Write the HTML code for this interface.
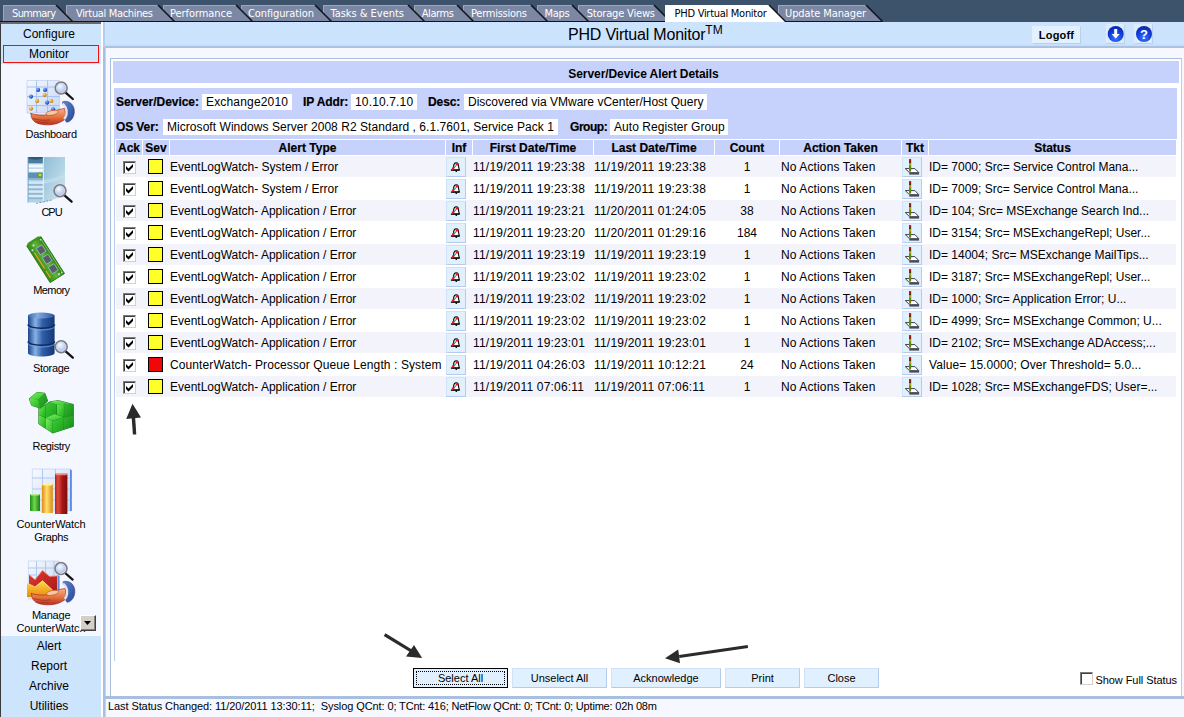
<!DOCTYPE html>
<html lang="en"><head><meta charset="utf-8"><title>PHD Virtual Monitor</title>
<style>
*{box-sizing:border-box;margin:0;padding:0}
html,body{width:1184px;height:717px;overflow:hidden}
body{position:relative;background:#3e5570;font-family:"Liberation Sans",Arial,sans-serif;font-size:12px;color:#000}
.abs{position:absolute}
#tabbar{left:0;top:0;width:1184px;height:22px;background:#3d526b}
#tabsvg{left:0;top:0}
.tabt{position:absolute;top:7px;height:14px;line-height:14px;font-family:"DejaVu Sans","Liberation Sans",sans-serif;font-stretch:condensed;font-size:11px;color:#fff;white-space:pre}
.tabt.act{color:#000}
#side{left:0;top:22px;width:103px;height:695px;background:#f4f7ff;border-left:1px solid #3c3c3c;border-top:2px solid #6a6a6a}
#sidetop{left:1px;top:24px;width:100px;height:40px;background:#cde4fd}
#sidebot{left:1px;top:636px;width:100px;height:81px;background:#cde4fd}
.sbtn{position:absolute;left:-1px;width:100px;text-align:center;font-size:12px;height:16px;line-height:16px;white-space:pre}
.slab{position:absolute;left:1px;width:100px;text-align:center;font-size:11px;line-height:13px;white-space:pre}
#sideR{left:101px;top:22px;width:2px;height:695px;background:#fff}
#mainL{left:103px;top:22px;width:3px;height:695px;background:linear-gradient(90deg,#a9bfe0 0,#a9bfe0 2px,#c6d4ec 2px,#c6d4ec 3px)}
#band{left:103px;top:22px;width:1081px;height:26px;background:linear-gradient(#cbe3fd 0,#cde4fe 22px,#c3daf5 24px,#afc5e4 24px,#a9bfe0 26px);border-left:2px solid #b6cdec}
#title{left:105px;top:22px;width:1079px;text-align:center}
#main{left:106px;top:48px;width:1078px;height:649px;background:#f7f7ff}
#mainB{left:103px;top:696px;width:1081px;height:3px;background:#a9bfe0}
#status{left:106px;top:699px;width:1078px;height:18px;background:#f6f7ff;font-size:11px;line-height:14px;white-space:pre}
#panel{left:110px;top:58px;width:1072px;height:638px;background:#fff;border:1px solid #a9bedd;border-right-color:#bccdec;border-bottom:none}
.bandc{background:#c6d2fb}
.lab{-webkit-text-stroke:.2px #000;position:absolute;font-weight:bold;font-size:12px;line-height:16px;height:16px;white-space:pre;letter-spacing:-.1px}
.box{position:absolute;background:#fff;height:16px;line-height:16px;font-size:12px;white-space:pre;padding-left:4px}
.th{-webkit-text-stroke:.2px #000;position:absolute;top:140px;height:15px;line-height:17px;overflow:hidden;background:#c6d2fb;font-weight:bold;font-size:12px;text-align:center;white-space:pre}
.row{position:absolute;left:116px;width:1060px;height:21px}
.row.odd{background:#f3f3fc}
.c{position:absolute;top:1px;height:21px;line-height:21px;font-size:12px;white-space:pre}
.cb{position:absolute;left:7px;top:5px;width:13px;height:13px;background:#fff;border:1px solid;border-color:#7b7b7b #d4d0c8 #d4d0c8 #7b7b7b;box-shadow:inset 1px 1px 0 #404040}
.sev{position:absolute;left:32px;top:3px;width:15px;height:15px;border:1px solid #000}
.ib{position:absolute;top:1px;width:20px;height:20px;background:#e1f0fd;border:1px solid;border-color:#cfe2f8 #b4cbee #b4cbee #cfe2f8}
.btn{position:absolute;top:668px;height:20px;background:#e1f0fe;border:1px solid;border-color:#cfe2f8 #b4cbee #b4cbee #cfe2f8;text-align:center;font-size:11px;line-height:18px;white-space:pre}
</style></head>
<body>
<div id="tabbar" class="abs"></div>
<svg id="tabsvg" class="abs" width="1184" height="23" viewBox="0 0 1184 23"><polygon points="778,5 866,5 882,21 778,21" fill="#7b87a3"/><polyline points="778.5,21 778.5,5.5 866,5.5" fill="none" stroke="#9ca6bd" stroke-width="1"/><line x1="866" y1="5" x2="882.5" y2="21.5" stroke="#10141c" stroke-width="1.6"/><polygon points="578,5 654,5 670,21 578,21" fill="#7b87a3"/><polyline points="578.5,21 578.5,5.5 654,5.5" fill="none" stroke="#9ca6bd" stroke-width="1"/><line x1="654" y1="5" x2="670.5" y2="21.5" stroke="#10141c" stroke-width="1.6"/><polygon points="537,5 572,5 588,21 537,21" fill="#7b87a3"/><polyline points="537.5,21 537.5,5.5 572,5.5" fill="none" stroke="#9ca6bd" stroke-width="1"/><line x1="572" y1="5" x2="588.5" y2="21.5" stroke="#10141c" stroke-width="1.6"/><polygon points="463,5 531,5 547,21 463,21" fill="#7b87a3"/><polyline points="463.5,21 463.5,5.5 531,5.5" fill="none" stroke="#9ca6bd" stroke-width="1"/><line x1="531" y1="5" x2="547.5" y2="21.5" stroke="#10141c" stroke-width="1.6"/><polygon points="414,5 457,5 473,21 414,21" fill="#7b87a3"/><polyline points="414.5,21 414.5,5.5 457,5.5" fill="none" stroke="#9ca6bd" stroke-width="1"/><line x1="457" y1="5" x2="473.5" y2="21.5" stroke="#10141c" stroke-width="1.6"/><polygon points="323,5 408,5 424,21 323,21" fill="#7b87a3"/><polyline points="323.5,21 323.5,5.5 408,5.5" fill="none" stroke="#9ca6bd" stroke-width="1"/><line x1="408" y1="5" x2="424.5" y2="21.5" stroke="#10141c" stroke-width="1.6"/><polygon points="241,5 315,5 331,21 241,21" fill="#7b87a3"/><polyline points="241.5,21 241.5,5.5 315,5.5" fill="none" stroke="#9ca6bd" stroke-width="1"/><line x1="315" y1="5" x2="331.5" y2="21.5" stroke="#10141c" stroke-width="1.6"/><polygon points="163,5 236,5 252,21 163,21" fill="#7b87a3"/><polyline points="163.5,21 163.5,5.5 236,5.5" fill="none" stroke="#9ca6bd" stroke-width="1"/><line x1="236" y1="5" x2="252.5" y2="21.5" stroke="#10141c" stroke-width="1.6"/><polygon points="66,5 158,5 174,21 66,21" fill="#7b87a3"/><polyline points="66.5,21 66.5,5.5 158,5.5" fill="none" stroke="#9ca6bd" stroke-width="1"/><line x1="158" y1="5" x2="174.5" y2="21.5" stroke="#10141c" stroke-width="1.6"/><polygon points="3,5 56,5 72,21 3,21" fill="#7b87a3"/><polyline points="3.5,21 3.5,5.5 56,5.5" fill="none" stroke="#9ca6bd" stroke-width="1"/><line x1="56" y1="5" x2="72.5" y2="21.5" stroke="#10141c" stroke-width="1.6"/><rect x="0" y="21" width="882" height="1" fill="#10141c"/><polygon points="665,5 769,5 786,22 665,22" fill="#fff"/><line x1="769" y1="5" x2="786" y2="22" stroke="#10141c" stroke-width="1.4"/></svg>
<div class="tabt" style="left:12px;letter-spacing:-0.638px">Summary</div>
<div class="tabt" style="left:76px;letter-spacing:-0.336px">Virtual Machines</div>
<div class="tabt" style="left:170px;letter-spacing:-0.066px">Performance</div>
<div class="tabt" style="left:248px;letter-spacing:-0.094px">Configuration</div>
<div class="tabt" style="left:330.5px;letter-spacing:-0.026px">Tasks &amp; Events</div>
<div class="tabt" style="left:421.7px;letter-spacing:-0.393px">Alarms</div>
<div class="tabt" style="left:471px;letter-spacing:-0.248px">Permissions</div>
<div class="tabt" style="left:544.6px;letter-spacing:-0.349px">Maps</div>
<div class="tabt" style="left:586.7px;letter-spacing:-0.182px">Storage Views</div>
<div class="tabt act" style="left:674.6px;letter-spacing:-0.281px">PHD Virtual Monitor</div>
<div class="tabt" style="left:785px;letter-spacing:-0.106px">Update Manager</div>
<div id="side" class="abs"></div><div id="sidetop" class="abs"></div><div id="sidebot" class="abs"></div>
<div class="sbtn" style="top:26px">Configure</div>
<div class="abs" style="left:3px;top:45px;width:96px;height:18px;border:1px solid #f01010"></div>
<div class="sbtn" style="top:46px">Monitor</div>
<div class="sbtn" style="top:638px">Alert</div><div class="sbtn" style="top:658px">Report</div><div class="sbtn" style="top:678px">Archive</div><div class="sbtn" style="top:698px">Utilities</div>
<svg class="abs" style="left:0;top:0" width="103" height="717" viewBox="0 0 103 717">
<defs>
<radialGradient id="lens" cx="40%" cy="35%" r="75%"><stop offset="0" stop-color="#f4faff"/><stop offset=".55" stop-color="#bcd0f4"/><stop offset="1" stop-color="#c9b4e6"/></radialGradient>
<g id="mag"><line x1="4.2" y1="4.4" x2="11.6" y2="11" stroke="#141414" stroke-width="2.3" stroke-linecap="round"/><circle cx="0" cy="0" r="5.9" fill="url(#lens)" stroke="#7d7d80" stroke-width="1.7"/><circle cx="0" cy="0" r="4.7" fill="none" stroke="#d8dde8" stroke-width=".7"/></g>
<linearGradient id="skin" x1="0" y1="0" x2="0" y2="1"><stop offset="0" stop-color="#f6b48a"/><stop offset=".55" stop-color="#e2703c"/><stop offset="1" stop-color="#b8301c"/></linearGradient>
<linearGradient id="cuff" x1="0" y1="0" x2="1" y2="1"><stop offset="0" stop-color="#5c88d4"/><stop offset="1" stop-color="#24468f"/></linearGradient>
<g id="hand">
<path d="M30.5 113.5c5 1.5 12 2 18 1.2l4-2.6c3-1.600 8-3.200 12.200-3.600l1.500 10c-3.700 2.600-7.5 5-12.5 5.8-6 1-13 .6-17.5-1.6-3.2-1.6-5.6-5.4-5-9.2z" fill="url(#skin)" stroke="#a8281c" stroke-width=".7"/>
<path d="M33 118.5c5 1.8 11 2.2 17 1.4" fill="none" stroke="#a4301e" stroke-width=".8"/>
<path d="M36 121.5c4 1 8 1.2 12 .8" fill="none" stroke="#a4301e" stroke-width=".7"/>
<ellipse cx="52" cy="112.8" rx="6.2" ry="2.3" transform="rotate(-12 52 112.8)" fill="#f8c8a4" stroke="#b84a2a" stroke-width=".6"/>
<path d="M62.500 101.800C69.500 99.500 75.300 105.500 74.300 113C73.500 118.500 70.500 121.800 66.500 122.300L64.300 118.800C67.800 115 68 108 62.800 104.200Z" fill="url(#cuff)" stroke="#4a2a8a" stroke-width=".5"/>
<path d="M62.600 103.600C67.800 107.500 67.800 115 64.200 119.200" fill="none" stroke="#dfe3ee" stroke-width="2.100"/>
</g>
<linearGradient id="sheet" x1="0" y1="0" x2="1" y2="1"><stop offset="0" stop-color="#f6f9ff"/><stop offset="1" stop-color="#c6d6f4"/></linearGradient>
<radialGradient id="bdot" cx="35%" cy="30%" r="70%"><stop offset="0" stop-color="#8ab4ff"/><stop offset="1" stop-color="#0838b0"/></radialGradient>
<radialGradient id="odot" cx="35%" cy="30%" r="70%"><stop offset="0" stop-color="#ffe08a"/><stop offset="1" stop-color="#c87800"/></radialGradient>
<linearGradient id="cpuside" x1="0" y1="0" x2="1" y2="1"><stop offset="0" stop-color="#8fbcd6"/><stop offset=".5" stop-color="#aed2e4"/><stop offset="1" stop-color="#d4e8f2"/></linearGradient>
<linearGradient id="cyl" x1="0" y1="0" x2="1" y2="0"><stop offset="0" stop-color="#1c448a"/><stop offset=".28" stop-color="#88b0e6"/><stop offset=".55" stop-color="#2f5ea8"/><stop offset="1" stop-color="#143674"/></linearGradient>
<linearGradient id="cyltop" x1="0" y1="0" x2="1" y2="0"><stop offset="0" stop-color="#3a66ae"/><stop offset=".35" stop-color="#86aae0"/><stop offset="1" stop-color="#2c559c"/></linearGradient>
<linearGradient id="gl" x1="0" y1="0" x2="1" y2="1"><stop offset="0" stop-color="#66ea4c"/><stop offset="1" stop-color="#22ac22"/></linearGradient><linearGradient id="gl2" x1="0" y1="0" x2="1" y2="1"><stop offset="0" stop-color="#7cf060"/><stop offset="1" stop-color="#2cb42c"/></linearGradient><linearGradient id="gm" x1="0" y1="0" x2="1" y2="1"><stop offset="0" stop-color="#3ccc36"/><stop offset="1" stop-color="#1ca01c"/></linearGradient>
<linearGradient id="gr" x1="0" y1="0" x2="1" y2="1"><stop offset="0" stop-color="#34ba30"/><stop offset="1" stop-color="#168c18"/></linearGradient>
<linearGradient id="gt" x1="0" y1="0" x2="1" y2="1"><stop offset="0" stop-color="#7cf060"/><stop offset="1" stop-color="#30c030"/></linearGradient>
<linearGradient id="barg" x1="0" y1="0" x2="1" y2="0"><stop offset="0" stop-color="#1d8a1a"/><stop offset=".45" stop-color="#6fd848"/><stop offset="1" stop-color="#1f7a18"/></linearGradient>
<linearGradient id="bary" x1="0" y1="0" x2="1" y2="0"><stop offset="0" stop-color="#e08a10"/><stop offset=".45" stop-color="#ffe070"/><stop offset="1" stop-color="#d88a10"/></linearGradient>
<linearGradient id="barr" x1="0" y1="0" x2="1" y2="0"><stop offset="0" stop-color="#b82020"/><stop offset=".25" stop-color="#dc4c3c"/><stop offset=".6" stop-color="#a41616"/><stop offset="1" stop-color="#7c0e0e"/></linearGradient>
<linearGradient id="mem" x1="0" y1="0" x2="1" y2="0"><stop offset="0" stop-color="#2f8a14"/><stop offset=".5" stop-color="#62b436"/><stop offset="1" stop-color="#2a7a12"/></linearGradient>
<linearGradient id="redar" x1="0" y1="0" x2="1" y2="1"><stop offset="0" stop-color="#e03a30"/><stop offset="1" stop-color="#a81818"/></linearGradient>
<linearGradient id="yelar" x1="0" y1="0" x2="0" y2="1"><stop offset="0" stop-color="#ffd840"/><stop offset="1" stop-color="#e88a10"/></linearGradient>
</defs>

<!-- Dashboard -->
<g>
<path d="M27 80.5h32.3l.4 32.5H27z" fill="url(#sheet)" stroke="#b4c8ec" stroke-width=".6"/>
<path d="M36.6 80.5v32.500M47.600 80.500v32.500M27 87h32.400M27 96.600h32.400M27 105.600h32.400" stroke="#9cbcf0" stroke-width=".9" fill="none"/>
<g fill="url(#bdot)"><circle cx="38.1" cy="89.9" r="2.1"/><circle cx="45.100" cy="89.900" r="2.100"/><circle cx="31" cy="96.600" r="2.100"/><circle cx="47.100" cy="102.600" r="2.100"/><circle cx="53.100" cy="109.300" r="2.100"/></g>
<g fill="url(#odot)"><circle cx="44.6" cy="94.9" r="2.1"/><circle cx="37.100" cy="100.900" r="2.100"/><circle cx="51.300" cy="100.900" r="2.100"/><circle cx="31" cy="108.600" r="2.100"/></g>
<use href="#hand"/>
<use href="#mag" x="61.2" y="88"/>
</g>

<!-- CPU -->
<g>
<path d="M43 157h22v39l-22 6.500z" fill="url(#cpuside)"/>
<path d="M43 180c8-1 15-3 22-6v4c-7 3-14 5-22 6z" fill="#c4deec" opacity=".7"/>
<rect x="28" y="157" width="15" height="45.500" fill="#b4d2e6"/>
<rect x="28" y="157" width="15" height="6.200" fill="#4a7ba0"/>
<path d="M28 158.500c5 1.500 10 1.500 15 0v-1.500h-15z" fill="#2e5a80"/>
<rect x="28.700" y="164.500" width="14" height="3" fill="#f4f8fc"/>
<rect x="28.700" y="168.800" width="14" height="3" fill="#f4f8fc"/>
<rect x="28" y="172.600" width="15" height="5.400" fill="#5f8fb2"/>
<rect x="28" y="178" width="15" height="2" fill="#88b4d0"/>
<circle cx="40" cy="175" r="2.100" fill="#b8e020" stroke="#4a7a10" stroke-width=".6"/>
<g fill="#d8e8f4"><rect x="28.500" y="181.500" width="14.500" height="2.200"/><rect x="28.500" y="186" width="14.500" height="2.200"/><rect x="28.500" y="190.500" width="14.500" height="2.200"/><rect x="28.500" y="195" width="14.500" height="2.200"/></g>
<g fill="#8db8d4"><rect x="28" y="184" width="15" height="1.600"/><rect x="28" y="188.500" width="15" height="1.600"/><rect x="28" y="193" width="15" height="1.600"/><rect x="28" y="197.500" width="15" height="1.600"/></g>
<path d="M28 157v45.500" stroke="#6a9cc0" stroke-width=".8"/>
<path d="M43.300 157v45.500" stroke="#ffffff" stroke-width=".8"/>
<path d="M36 203.500l16-3.500" stroke="#4a4a50" stroke-width=".9" stroke-dasharray="2 1.500" opacity=".6"/>
<use href="#mag" x="60" y="190.700"/>
</g>

<!-- Memory -->
<g transform="translate(45.600 259.700) rotate(-32.600)">
<rect x="-8.500" y="-21.800" width="17" height="43.600" fill="url(#mem)" stroke="#2a7a10" stroke-width=".8"/>
<path d="M-8.500 -21.800l2.500-2h12l3 2z" fill="#3c9a1c"/>
<rect x="-6.200" y="-12" width="1.100" height="19" fill="#ffa020"/><rect x="-6.200" y="9.500" width="1.100" height="8.500" fill="#ffa020"/>
<g fill="#5c5c64" stroke="#8cc8e8" stroke-width=".7"><rect x="-1.800" y="-14.500" width="6.800" height="7.600"/><rect x="-1.800" y="-3.300" width="6.800" height="7.600"/><rect x="-1.800" y="7.900" width="6.800" height="7.600"/></g>
<g fill="#bfe4ff"><circle cx="-2.500" cy="-18.600" r="1.100"/><circle cx="-6" cy="-15" r="1"/><circle cx="3.500" cy="19.300" r="1.100"/><circle cx="6.500" cy="-19.500" r=".8"/><circle cx="6.800" cy="19.600" r=".8"/></g>
<path d="M7.300 -20v40" stroke="#8ad060" stroke-width=".8"/>
</g>

<!-- Storage -->
<g>
<path d="M28 315.500v37.500c0 2 6 3.500 13.300 3.500s13.300-1.500 13.300-3.500v-37.500z" fill="url(#cyl)"/>
<ellipse cx="41.300" cy="315.500" rx="13.300" ry="3" fill="url(#cyltop)"/>
<path d="M28 324.400c0 2.200 6 3.800 13.300 3.800s13.300-1.600 13.300-3.800" fill="none" stroke="#0e2a5e" stroke-width="1.500"/>
<path d="M28 326.200c0 2.200 6 3.800 13.300 3.800s13.300-1.600 13.300-3.800" fill="none" stroke="#7ea4dc" stroke-width="1" opacity=".8"/>
<path d="M28 341.400c0 2.200 6 3.800 13.300 3.800s13.300-1.600 13.300-3.800" fill="none" stroke="#0e2a5e" stroke-width="1.500"/>
<path d="M28 343.200c0 2.200 6 3.800 13.300 3.800s13.300-1.600 13.300-3.800" fill="none" stroke="#7ea4dc" stroke-width="1" opacity=".8"/>
<use href="#mag" x="61.200" y="346.700"/>
</g>

<!-- Registry -->
<g>
<polygon points="38.8,408.0 45.2,404.9 49.4,401.9 58.3,400.5 73.4,404.4 73.4,426.4 52.7,433.1 38.8,423.9" fill="#138613" stroke="#0e6e0e" stroke-width=".7" stroke-linejoin="round"/>
<polygon points="49.4,401.9 58.3,400.5 73.4,404.4 65.0,403.8 56.4,404.5" fill="url(#gt)"/>
<polygon points="38.9,408.2 45.2,405.2 45.2,417.6 38.9,414.7" fill="url(#gl)"/>
<polygon points="45.5,405.2 49.4,402.0 56.2,404.5 56.2,414.4 45.6,417.6" fill="url(#gm)"/>
<polygon points="56.9,404.6 63.9,403.8 63.9,417.1 56.9,414.5" fill="url(#gl)"/>
<polygon points="64.2,403.8 73.3,404.5 73.3,415.4 64.2,417.1" fill="url(#gr)"/>
<polygon points="38.9,415.0 45.3,417.9 45.3,428.2 38.9,423.9" fill="url(#gl)"/>
<polygon points="45.7,418.0 52.6,420.8 52.6,432.9 45.7,428.4" fill="url(#gl2)"/>
<polygon points="45.8,417.8 54.7,414.2 63.8,417.2 52.7,420.5" fill="url(#gt)"/>
<polygon points="53.0,420.8 63.8,417.4 63.5,429.5 53.0,432.9" fill="url(#gm)"/>
<polygon points="64.1,417.4 73.3,415.6 73.3,426.3 63.8,429.5" fill="url(#gr)"/>
<polygon points="29.2,398.8 36.9,392.3 44.9,393.2 47.7,400.9 40.4,408.2 31.7,405.4" fill="#138613" stroke="#0e6e0e" stroke-width=".7" stroke-linejoin="round"/>
<polygon points="29.2,398.8 36.9,392.3 44.9,393.2 38.3,399.6" fill="url(#gt)"/>
<polygon points="29.2,398.8 38.3,399.6 40.4,408.2 31.7,405.4" fill="url(#gl)"/>
<polygon points="38.3,399.6 44.9,393.2 47.7,400.9 40.4,408.2" fill="url(#gr)"/>
</g>

<!-- CounterWatch Graphs -->
<g>
<path d="M32.300 469h37.700l1.500 1.500v40.500h-39.200z" fill="url(#sheet)" stroke="#b8ccf0" stroke-width=".6"/>
<path d="M70 469l1.800 1.500v40.500h-1.800z" fill="#5a8ae0"/>
<path d="M42.500 469v42M55.500 469v42M32.300 478h38M32.300 489h38M32.300 500h38" stroke="#a8c4f0" stroke-width=".9" fill="none"/>
<rect x="30" y="494" width="10" height="17" fill="url(#barg)"/><path d="M30 494h10l-1 1.500h-8z" fill="#b0f090"/>
<rect x="41.900" y="484" width="10.900" height="29" fill="url(#bary)"/><path d="M41.900 484h10.900l-1 1.500h-8.900z" fill="#fff0a0"/>
<rect x="55" y="473.700" width="12.400" height="40.300" fill="url(#barr)"/><path d="M55 473.700h12.400l-1 1.500h-10.400z" fill="#f08a78"/>
</g>

<!-- Manage CounterWatch -->
<g>
<path d="M28.400 561h30.600v38h-30.600z" fill="url(#sheet)" stroke="#b8ccf0" stroke-width=".6"/>
<path d="M36.500 561v20M45.500 561v12M54 561v16M28.400 568h30M28.400 575h8" stroke="#a8c4f0" stroke-width=".9" fill="none"/>
<path d="M57.500 575l2 1v18h-2z" fill="#5a8ae0"/>
<path d="M29 574.700l6 5 7.500-9.300 7 6 7.500-.4v18h-28z" fill="url(#redar)"/>
<path d="M29 574.700l6 5 7.500-9.300 7 6 7.500-.400" fill="none" stroke="#f08070" stroke-width=".8"/>
<path d="M27 583l8 4 7.500-6.200 10 9.200v7h-25.500z" fill="url(#yelar)"/>
<path d="M27 583l8 4 7.500-6.200 10 9.200" fill="none" stroke="#ffe890" stroke-width=".8"/>
<use href="#hand" x=".5" y="480"/>
<use href="#mag" x="61" y="568.600"/>
</g>
</svg>
<div class="slab" style="top:128px;letter-spacing:-0.279px;padding-left:0.28px">Dashboard</div>
<div class="slab" style="top:206px;letter-spacing:-1.017px;padding-left:1.02px">CPU</div>
<div class="slab" style="top:284px;letter-spacing:-0.627px;padding-left:0.63px">Memory</div>
<div class="slab" style="top:362px;letter-spacing:-0.322px;padding-left:0.32px">Storage</div>
<div class="slab" style="top:440px;letter-spacing:-0.392px;padding-left:0.39px">Registry</div>
<div class="slab" style="top:518px;letter-spacing:-0.064px;padding-left:0.06px">CounterWatch</div>
<div class="slab" style="top:531px;letter-spacing:-0.376px;padding-left:0.38px">Graphs</div>
<div class="slab" style="top:609px;letter-spacing:-0.233px;padding-left:0.23px">Manage</div>
<div class="slab" style="top:622px;letter-spacing:-0.064px;padding-left:0.06px">CounterWatch</div>
<div class="abs" style="left:80px;top:615px;width:16px;height:16px;background:#d4d0c8;border:1px solid;border-color:#fff #404040 #404040 #fff;box-shadow:inset -1px -1px 0 #808080"></div>
<svg class="abs" style="left:80px;top:615px" width="16" height="16"><polygon points="4,6 11,6 7.5,10" fill="#000"/></svg>
<div id="sideR" class="abs"></div><div id="mainL" class="abs"></div>
<div id="band" class="abs"></div>
<div class="abs" style="left:568px;top:26px;font-size:16px;line-height:18px;white-space:pre;letter-spacing:-.2px" id="ttl">PHD Virtual Monitor<span style="font-size:12px;position:relative;top:-6px;letter-spacing:0">TM</span></div>
<div class="abs" style="left:1032px;top:26px;width:49px;height:18px;background:#e3f1fe;border:1px solid;border-color:#e3f1fe #b9cfea #b9cfea #e3f1fe;font-weight:bold;font-size:11px;line-height:17px;text-align:center;letter-spacing:.2px">Logoff</div>
<div class="abs" style="left:1106px;top:24px;width:19px;height:20px;background:#dcecfc;border:1px solid;border-color:#dcecfc #b9cfea #b9cfea #dcecfc"></div>
<div class="abs" style="left:1134px;top:24px;width:19px;height:20px;background:#dcecfc;border:1px solid;border-color:#dcecfc #b9cfea #b9cfea #dcecfc"></div>
<svg class="abs" style="left:1106px;top:24px" width="48" height="20" viewBox="0 0 48 20"><defs><radialGradient id="bg1" cx="50%" cy="75%" r="70%"><stop offset="0" stop-color="#3b78ff"/><stop offset=".6" stop-color="#0f3fe0"/><stop offset="1" stop-color="#0a2aa8"/></radialGradient></defs>
<circle cx="9.7" cy="10" r="8" fill="url(#bg1)"/><path d="M8.2 5h3v5h2.6l-4.1 4.6-4.1-4.6h2.6z" fill="#fff"/>
<circle cx="38" cy="10" r="8" fill="url(#bg1)"/><text x="38" y="14.5" text-anchor="middle" font-family="Liberation Sans,Arial,sans-serif" font-weight="bold" font-size="13" fill="#fff">?</text></svg>
<div id="main" class="abs"></div><div id="mainB" class="abs"></div>
<div id="status" class="abs"><span style="position:absolute;left:2px;top:0px"><span style="letter-spacing:-0.088px">Last Status Changed: 11/20/2011 13:30:11;  Syslog QCnt: 0;</span><span style="letter-spacing:-0.191px"> TCnt: 416; NetFlow QCnt: 0; TCnt: 0; Uptime: 02h 08m</span></span></div>
<div id="panel" class="abs"></div>
<div class="abs bandc" style="left:113px;top:61px;width:1066px;height:22px"></div>
<div class="abs" style="left:110.500px;top:65.500px;width:1066px;text-align:center;font-weight:bold;font-size:12px;line-height:16px;letter-spacing:-.07px">Server/Device Alert Details</div>
<div class="abs" style="left:114px;top:88px;width:1063px;height:573px;border-left:1px solid #b7cdf0"></div>
<div class="abs bandc" style="left:114px;top:88px;width:1063px;height:51px"></div>
<div class="lab" style="left:116px;top:94px;letter-spacing:-0.03px">Server/Device:</div>
<div class="box" style="left:202px;top:94px;width:90px;letter-spacing:0.17px">Exchange2010</div>
<div class="lab" style="left:303px;top:94px;letter-spacing:-0.1px">IP Addr:</div>
<div class="box" style="left:351px;top:94px;width:66px;letter-spacing:0.15px">10.10.7.10</div>
<div class="lab" style="left:428px;top:94px;letter-spacing:-0.1px">Desc:</div>
<div class="box" style="left:464px;top:94px;width:243px;letter-spacing:0px">Discovered via VMware vCenter/Host Query</div>
<div class="lab" style="left:116px;top:119px;letter-spacing:-0.1px">OS Ver:</div>
<div class="box" style="left:163px;top:119px;width:395px;letter-spacing:0.05px">Microsoft Windows Server 2008 R2 Standard , 6.1.7601, Service Pack 1</div>
<div class="lab" style="left:570px;top:119px;letter-spacing:-0.45px">Group:</div>
<div class="box" style="left:610px;top:119px;width:118px;letter-spacing:0.07px">Auto Register Group</div>
<div class="th" style="left:116px;width:26px">Ack</div>
<div class="th" style="left:143px;width:26px">Sev</div>
<div class="th" style="left:170px;width:275px">Alert Type</div>
<div class="th" style="left:446px;width:26px">Inf</div>
<div class="th" style="left:473px;width:120px">First Date/Time</div>
<div class="th" style="left:594px;width:120px">Last Date/Time</div>
<div class="th" style="left:715px;width:64px">Count</div>
<div class="th" style="left:780px;width:121px">Action Taken</div>
<div class="th" style="left:902px;width:26px">Tkt</div>
<div class="th" style="left:929px;width:247px">Status</div>
<div class="row odd" style="top:156px"><div class="cb"><svg width="11" height="11" viewBox="0 0 11 11" style="position:absolute;left:0;top:0"><path d="M2 4v3l2.500 2.500L9 5V2L4.500 6.500z" fill="#000"/></svg></div><div class="sev" style="background:#ffff2a"></div><div class="c" style="left:54px">EventLogWatch- System / Error</div><div class="ib" style="left:330px"><svg width="18" height="18" viewBox="0 0 18 18" style="position:absolute;left:0;top:0"><g transform="translate(8.500 8.850) scale(.880) translate(-9.250 -8.750)"><path d="M5.600 12.300c1.200-1.500 1.300-3 1.500-4.600.2-2 1.200-3.500 3-3.700 1.500.1 2.300 1.300 2.500 3 .2 2 .3 3.500 1.100 5.300z" fill="#fff" stroke="#000" stroke-width="1.200"/><rect x="4" y="11.700" width="9.500" height="1.400" fill="#000"/><rect x="9.300" y="13" width="1.700" height="1.500" fill="#000"/><path d="M9.700 7.300L8.200 9" stroke="#2a8a8a" stroke-width="1.400"/><path d="M12.400 4.600L10 7" stroke="#f01010" stroke-width="2.300"/><path d="M7.800 8.800L5.400 12.300" stroke="#f01010" stroke-width="2.300"/></g></svg></div><div class="c" style="left:357px;letter-spacing:.2px">11/19/2011 19:23:38</div><div class="c" style="left:478px;letter-spacing:.2px">11/19/2011 19:23:38</div><div class="c" style="left:599px;width:64px;text-align:center">1</div><div class="c" style="left:665px;letter-spacing:.12px">No Actions Taken</div><div class="ib" style="left:786px"><svg width="18" height="18" viewBox="0 0 18 18" style="position:absolute;left:0;top:0"><path d="M2.300 10.600h9.600l4 4.100H6.500z" fill="#fff" stroke="#3c3c46" stroke-width="1"/><path d="M6.300 15.700h9.800" stroke="#4a4a52" stroke-width="1.800"/><rect x="6" y="1.200" width="2.100" height="12.400" fill="#6f7a12"/><rect x="6" y="1.200" width="2.100" height="2.100" fill="#c80c0c"/><rect x="6" y="3.300" width="2.100" height="1.800" fill="#3a3a10"/><rect x="6" y="5.200" width="2.100" height="2.600" fill="#c09a10"/><rect x="6" y="7.800" width="2.100" height="3.800" fill="#5f8a10"/></svg></div><div class="c" style="left:813px">ID= 7000; Src= Service Control Mana...</div></div>
<div class="row" style="top:178px"><div class="cb"><svg width="11" height="11" viewBox="0 0 11 11" style="position:absolute;left:0;top:0"><path d="M2 4v3l2.500 2.500L9 5V2L4.500 6.500z" fill="#000"/></svg></div><div class="sev" style="background:#ffff2a"></div><div class="c" style="left:54px">EventLogWatch- System / Error</div><div class="ib" style="left:330px"><svg width="18" height="18" viewBox="0 0 18 18" style="position:absolute;left:0;top:0"><g transform="translate(8.500 8.850) scale(.880) translate(-9.250 -8.750)"><path d="M5.600 12.300c1.200-1.500 1.300-3 1.500-4.600.2-2 1.200-3.500 3-3.700 1.500.1 2.300 1.300 2.500 3 .2 2 .3 3.500 1.100 5.300z" fill="#fff" stroke="#000" stroke-width="1.200"/><rect x="4" y="11.700" width="9.500" height="1.400" fill="#000"/><rect x="9.300" y="13" width="1.700" height="1.500" fill="#000"/><path d="M9.700 7.300L8.200 9" stroke="#2a8a8a" stroke-width="1.400"/><path d="M12.400 4.600L10 7" stroke="#f01010" stroke-width="2.300"/><path d="M7.800 8.800L5.400 12.300" stroke="#f01010" stroke-width="2.300"/></g></svg></div><div class="c" style="left:357px;letter-spacing:.2px">11/19/2011 19:23:38</div><div class="c" style="left:478px;letter-spacing:.2px">11/19/2011 19:23:38</div><div class="c" style="left:599px;width:64px;text-align:center">1</div><div class="c" style="left:665px;letter-spacing:.12px">No Actions Taken</div><div class="ib" style="left:786px"><svg width="18" height="18" viewBox="0 0 18 18" style="position:absolute;left:0;top:0"><path d="M2.300 10.600h9.600l4 4.100H6.500z" fill="#fff" stroke="#3c3c46" stroke-width="1"/><path d="M6.300 15.700h9.800" stroke="#4a4a52" stroke-width="1.800"/><rect x="6" y="1.200" width="2.100" height="12.400" fill="#6f7a12"/><rect x="6" y="1.200" width="2.100" height="2.100" fill="#c80c0c"/><rect x="6" y="3.300" width="2.100" height="1.800" fill="#3a3a10"/><rect x="6" y="5.200" width="2.100" height="2.600" fill="#c09a10"/><rect x="6" y="7.800" width="2.100" height="3.800" fill="#5f8a10"/></svg></div><div class="c" style="left:813px">ID= 7009; Src= Service Control Mana...</div></div>
<div class="row odd" style="top:200px"><div class="cb"><svg width="11" height="11" viewBox="0 0 11 11" style="position:absolute;left:0;top:0"><path d="M2 4v3l2.500 2.500L9 5V2L4.500 6.500z" fill="#000"/></svg></div><div class="sev" style="background:#ffff2a"></div><div class="c" style="left:54px">EventLogWatch- Application / Error</div><div class="ib" style="left:330px"><svg width="18" height="18" viewBox="0 0 18 18" style="position:absolute;left:0;top:0"><g transform="translate(8.500 8.850) scale(.880) translate(-9.250 -8.750)"><path d="M5.600 12.300c1.200-1.500 1.300-3 1.500-4.600.2-2 1.200-3.500 3-3.700 1.500.1 2.300 1.300 2.500 3 .2 2 .3 3.500 1.100 5.300z" fill="#fff" stroke="#000" stroke-width="1.200"/><rect x="4" y="11.700" width="9.500" height="1.400" fill="#000"/><rect x="9.300" y="13" width="1.700" height="1.500" fill="#000"/><path d="M9.700 7.300L8.200 9" stroke="#2a8a8a" stroke-width="1.400"/><path d="M12.400 4.600L10 7" stroke="#f01010" stroke-width="2.300"/><path d="M7.800 8.800L5.400 12.300" stroke="#f01010" stroke-width="2.300"/></g></svg></div><div class="c" style="left:357px;letter-spacing:.2px">11/19/2011 19:23:21</div><div class="c" style="left:478px;letter-spacing:.2px">11/20/2011 01:24:05</div><div class="c" style="left:599px;width:64px;text-align:center">38</div><div class="c" style="left:665px;letter-spacing:.12px">No Actions Taken</div><div class="ib" style="left:786px"><svg width="18" height="18" viewBox="0 0 18 18" style="position:absolute;left:0;top:0"><path d="M2.300 10.600h9.600l4 4.100H6.500z" fill="#fff" stroke="#3c3c46" stroke-width="1"/><path d="M6.300 15.700h9.800" stroke="#4a4a52" stroke-width="1.800"/><rect x="6" y="1.200" width="2.100" height="12.400" fill="#6f7a12"/><rect x="6" y="1.200" width="2.100" height="2.100" fill="#c80c0c"/><rect x="6" y="3.300" width="2.100" height="1.800" fill="#3a3a10"/><rect x="6" y="5.200" width="2.100" height="2.600" fill="#c09a10"/><rect x="6" y="7.800" width="2.100" height="3.800" fill="#5f8a10"/></svg></div><div class="c" style="left:813px">ID= 104; Src= MSExchange Search Ind...</div></div>
<div class="row" style="top:222px"><div class="cb"><svg width="11" height="11" viewBox="0 0 11 11" style="position:absolute;left:0;top:0"><path d="M2 4v3l2.500 2.500L9 5V2L4.500 6.500z" fill="#000"/></svg></div><div class="sev" style="background:#ffff2a"></div><div class="c" style="left:54px">EventLogWatch- Application / Error</div><div class="ib" style="left:330px"><svg width="18" height="18" viewBox="0 0 18 18" style="position:absolute;left:0;top:0"><g transform="translate(8.500 8.850) scale(.880) translate(-9.250 -8.750)"><path d="M5.600 12.300c1.200-1.500 1.300-3 1.500-4.600.2-2 1.200-3.500 3-3.700 1.500.1 2.300 1.300 2.500 3 .2 2 .3 3.500 1.100 5.300z" fill="#fff" stroke="#000" stroke-width="1.200"/><rect x="4" y="11.700" width="9.500" height="1.400" fill="#000"/><rect x="9.300" y="13" width="1.700" height="1.500" fill="#000"/><path d="M9.700 7.300L8.200 9" stroke="#2a8a8a" stroke-width="1.400"/><path d="M12.400 4.600L10 7" stroke="#f01010" stroke-width="2.300"/><path d="M7.800 8.800L5.400 12.300" stroke="#f01010" stroke-width="2.300"/></g></svg></div><div class="c" style="left:357px;letter-spacing:.2px">11/19/2011 19:23:20</div><div class="c" style="left:478px;letter-spacing:.2px">11/20/2011 01:29:16</div><div class="c" style="left:599px;width:64px;text-align:center">184</div><div class="c" style="left:665px;letter-spacing:.12px">No Actions Taken</div><div class="ib" style="left:786px"><svg width="18" height="18" viewBox="0 0 18 18" style="position:absolute;left:0;top:0"><path d="M2.300 10.600h9.600l4 4.100H6.500z" fill="#fff" stroke="#3c3c46" stroke-width="1"/><path d="M6.300 15.700h9.800" stroke="#4a4a52" stroke-width="1.800"/><rect x="6" y="1.200" width="2.100" height="12.400" fill="#6f7a12"/><rect x="6" y="1.200" width="2.100" height="2.100" fill="#c80c0c"/><rect x="6" y="3.300" width="2.100" height="1.800" fill="#3a3a10"/><rect x="6" y="5.200" width="2.100" height="2.600" fill="#c09a10"/><rect x="6" y="7.800" width="2.100" height="3.800" fill="#5f8a10"/></svg></div><div class="c" style="left:813px">ID= 3154; Src= MSExchangeRepl; User...</div></div>
<div class="row odd" style="top:244px"><div class="cb"><svg width="11" height="11" viewBox="0 0 11 11" style="position:absolute;left:0;top:0"><path d="M2 4v3l2.500 2.500L9 5V2L4.500 6.500z" fill="#000"/></svg></div><div class="sev" style="background:#ffff2a"></div><div class="c" style="left:54px">EventLogWatch- Application / Error</div><div class="ib" style="left:330px"><svg width="18" height="18" viewBox="0 0 18 18" style="position:absolute;left:0;top:0"><g transform="translate(8.500 8.850) scale(.880) translate(-9.250 -8.750)"><path d="M5.600 12.300c1.200-1.500 1.300-3 1.500-4.600.2-2 1.200-3.500 3-3.700 1.500.1 2.300 1.300 2.500 3 .2 2 .3 3.500 1.100 5.300z" fill="#fff" stroke="#000" stroke-width="1.200"/><rect x="4" y="11.700" width="9.500" height="1.400" fill="#000"/><rect x="9.300" y="13" width="1.700" height="1.500" fill="#000"/><path d="M9.700 7.300L8.200 9" stroke="#2a8a8a" stroke-width="1.400"/><path d="M12.400 4.600L10 7" stroke="#f01010" stroke-width="2.300"/><path d="M7.800 8.800L5.400 12.300" stroke="#f01010" stroke-width="2.300"/></g></svg></div><div class="c" style="left:357px;letter-spacing:.2px">11/19/2011 19:23:19</div><div class="c" style="left:478px;letter-spacing:.2px">11/19/2011 19:23:19</div><div class="c" style="left:599px;width:64px;text-align:center">1</div><div class="c" style="left:665px;letter-spacing:.12px">No Actions Taken</div><div class="ib" style="left:786px"><svg width="18" height="18" viewBox="0 0 18 18" style="position:absolute;left:0;top:0"><path d="M2.300 10.600h9.600l4 4.100H6.500z" fill="#fff" stroke="#3c3c46" stroke-width="1"/><path d="M6.300 15.700h9.800" stroke="#4a4a52" stroke-width="1.800"/><rect x="6" y="1.200" width="2.100" height="12.400" fill="#6f7a12"/><rect x="6" y="1.200" width="2.100" height="2.100" fill="#c80c0c"/><rect x="6" y="3.300" width="2.100" height="1.800" fill="#3a3a10"/><rect x="6" y="5.200" width="2.100" height="2.600" fill="#c09a10"/><rect x="6" y="7.800" width="2.100" height="3.800" fill="#5f8a10"/></svg></div><div class="c" style="left:813px">ID= 14004; Src= MSExchange MailTips...</div></div>
<div class="row" style="top:266px"><div class="cb"><svg width="11" height="11" viewBox="0 0 11 11" style="position:absolute;left:0;top:0"><path d="M2 4v3l2.500 2.500L9 5V2L4.500 6.500z" fill="#000"/></svg></div><div class="sev" style="background:#ffff2a"></div><div class="c" style="left:54px">EventLogWatch- Application / Error</div><div class="ib" style="left:330px"><svg width="18" height="18" viewBox="0 0 18 18" style="position:absolute;left:0;top:0"><g transform="translate(8.500 8.850) scale(.880) translate(-9.250 -8.750)"><path d="M5.600 12.300c1.200-1.500 1.300-3 1.500-4.600.2-2 1.200-3.500 3-3.700 1.500.1 2.300 1.300 2.500 3 .2 2 .3 3.500 1.100 5.300z" fill="#fff" stroke="#000" stroke-width="1.200"/><rect x="4" y="11.700" width="9.500" height="1.400" fill="#000"/><rect x="9.300" y="13" width="1.700" height="1.500" fill="#000"/><path d="M9.700 7.300L8.200 9" stroke="#2a8a8a" stroke-width="1.400"/><path d="M12.400 4.600L10 7" stroke="#f01010" stroke-width="2.300"/><path d="M7.800 8.800L5.400 12.300" stroke="#f01010" stroke-width="2.300"/></g></svg></div><div class="c" style="left:357px;letter-spacing:.2px">11/19/2011 19:23:02</div><div class="c" style="left:478px;letter-spacing:.2px">11/19/2011 19:23:02</div><div class="c" style="left:599px;width:64px;text-align:center">1</div><div class="c" style="left:665px;letter-spacing:.12px">No Actions Taken</div><div class="ib" style="left:786px"><svg width="18" height="18" viewBox="0 0 18 18" style="position:absolute;left:0;top:0"><path d="M2.300 10.600h9.600l4 4.100H6.500z" fill="#fff" stroke="#3c3c46" stroke-width="1"/><path d="M6.300 15.700h9.800" stroke="#4a4a52" stroke-width="1.800"/><rect x="6" y="1.200" width="2.100" height="12.400" fill="#6f7a12"/><rect x="6" y="1.200" width="2.100" height="2.100" fill="#c80c0c"/><rect x="6" y="3.300" width="2.100" height="1.800" fill="#3a3a10"/><rect x="6" y="5.200" width="2.100" height="2.600" fill="#c09a10"/><rect x="6" y="7.800" width="2.100" height="3.800" fill="#5f8a10"/></svg></div><div class="c" style="left:813px">ID= 3187; Src= MSExchangeRepl; User...</div></div>
<div class="row odd" style="top:288px"><div class="cb"><svg width="11" height="11" viewBox="0 0 11 11" style="position:absolute;left:0;top:0"><path d="M2 4v3l2.500 2.500L9 5V2L4.500 6.500z" fill="#000"/></svg></div><div class="sev" style="background:#ffff2a"></div><div class="c" style="left:54px">EventLogWatch- Application / Error</div><div class="ib" style="left:330px"><svg width="18" height="18" viewBox="0 0 18 18" style="position:absolute;left:0;top:0"><g transform="translate(8.500 8.850) scale(.880) translate(-9.250 -8.750)"><path d="M5.600 12.300c1.200-1.500 1.300-3 1.500-4.600.2-2 1.200-3.500 3-3.700 1.500.1 2.300 1.300 2.500 3 .2 2 .3 3.500 1.100 5.300z" fill="#fff" stroke="#000" stroke-width="1.200"/><rect x="4" y="11.700" width="9.500" height="1.400" fill="#000"/><rect x="9.300" y="13" width="1.700" height="1.500" fill="#000"/><path d="M9.700 7.300L8.200 9" stroke="#2a8a8a" stroke-width="1.400"/><path d="M12.400 4.600L10 7" stroke="#f01010" stroke-width="2.300"/><path d="M7.800 8.800L5.400 12.300" stroke="#f01010" stroke-width="2.300"/></g></svg></div><div class="c" style="left:357px;letter-spacing:.2px">11/19/2011 19:23:02</div><div class="c" style="left:478px;letter-spacing:.2px">11/19/2011 19:23:02</div><div class="c" style="left:599px;width:64px;text-align:center">1</div><div class="c" style="left:665px;letter-spacing:.12px">No Actions Taken</div><div class="ib" style="left:786px"><svg width="18" height="18" viewBox="0 0 18 18" style="position:absolute;left:0;top:0"><path d="M2.300 10.600h9.600l4 4.100H6.500z" fill="#fff" stroke="#3c3c46" stroke-width="1"/><path d="M6.300 15.700h9.800" stroke="#4a4a52" stroke-width="1.800"/><rect x="6" y="1.200" width="2.100" height="12.400" fill="#6f7a12"/><rect x="6" y="1.200" width="2.100" height="2.100" fill="#c80c0c"/><rect x="6" y="3.300" width="2.100" height="1.800" fill="#3a3a10"/><rect x="6" y="5.200" width="2.100" height="2.600" fill="#c09a10"/><rect x="6" y="7.800" width="2.100" height="3.800" fill="#5f8a10"/></svg></div><div class="c" style="left:813px">ID= 1000; Src= Application Error; U...</div></div>
<div class="row" style="top:310px"><div class="cb"><svg width="11" height="11" viewBox="0 0 11 11" style="position:absolute;left:0;top:0"><path d="M2 4v3l2.500 2.500L9 5V2L4.500 6.500z" fill="#000"/></svg></div><div class="sev" style="background:#ffff2a"></div><div class="c" style="left:54px">EventLogWatch- Application / Error</div><div class="ib" style="left:330px"><svg width="18" height="18" viewBox="0 0 18 18" style="position:absolute;left:0;top:0"><g transform="translate(8.500 8.850) scale(.880) translate(-9.250 -8.750)"><path d="M5.600 12.300c1.200-1.500 1.300-3 1.500-4.600.2-2 1.200-3.500 3-3.700 1.500.1 2.300 1.300 2.500 3 .2 2 .3 3.500 1.100 5.300z" fill="#fff" stroke="#000" stroke-width="1.200"/><rect x="4" y="11.700" width="9.500" height="1.400" fill="#000"/><rect x="9.300" y="13" width="1.700" height="1.500" fill="#000"/><path d="M9.700 7.300L8.200 9" stroke="#2a8a8a" stroke-width="1.400"/><path d="M12.400 4.600L10 7" stroke="#f01010" stroke-width="2.300"/><path d="M7.800 8.800L5.400 12.300" stroke="#f01010" stroke-width="2.300"/></g></svg></div><div class="c" style="left:357px;letter-spacing:.2px">11/19/2011 19:23:02</div><div class="c" style="left:478px;letter-spacing:.2px">11/19/2011 19:23:02</div><div class="c" style="left:599px;width:64px;text-align:center">1</div><div class="c" style="left:665px;letter-spacing:.12px">No Actions Taken</div><div class="ib" style="left:786px"><svg width="18" height="18" viewBox="0 0 18 18" style="position:absolute;left:0;top:0"><path d="M2.300 10.600h9.600l4 4.100H6.500z" fill="#fff" stroke="#3c3c46" stroke-width="1"/><path d="M6.300 15.700h9.800" stroke="#4a4a52" stroke-width="1.800"/><rect x="6" y="1.200" width="2.100" height="12.400" fill="#6f7a12"/><rect x="6" y="1.200" width="2.100" height="2.100" fill="#c80c0c"/><rect x="6" y="3.300" width="2.100" height="1.800" fill="#3a3a10"/><rect x="6" y="5.200" width="2.100" height="2.600" fill="#c09a10"/><rect x="6" y="7.800" width="2.100" height="3.800" fill="#5f8a10"/></svg></div><div class="c" style="left:813px">ID= 4999; Src= MSExchange Common; U...</div></div>
<div class="row odd" style="top:332px"><div class="cb"><svg width="11" height="11" viewBox="0 0 11 11" style="position:absolute;left:0;top:0"><path d="M2 4v3l2.500 2.500L9 5V2L4.500 6.500z" fill="#000"/></svg></div><div class="sev" style="background:#ffff2a"></div><div class="c" style="left:54px">EventLogWatch- Application / Error</div><div class="ib" style="left:330px"><svg width="18" height="18" viewBox="0 0 18 18" style="position:absolute;left:0;top:0"><g transform="translate(8.500 8.850) scale(.880) translate(-9.250 -8.750)"><path d="M5.600 12.300c1.200-1.500 1.300-3 1.500-4.600.2-2 1.200-3.500 3-3.700 1.500.1 2.300 1.300 2.500 3 .2 2 .3 3.500 1.100 5.300z" fill="#fff" stroke="#000" stroke-width="1.200"/><rect x="4" y="11.700" width="9.500" height="1.400" fill="#000"/><rect x="9.300" y="13" width="1.700" height="1.500" fill="#000"/><path d="M9.700 7.300L8.200 9" stroke="#2a8a8a" stroke-width="1.400"/><path d="M12.400 4.600L10 7" stroke="#f01010" stroke-width="2.300"/><path d="M7.800 8.800L5.400 12.300" stroke="#f01010" stroke-width="2.300"/></g></svg></div><div class="c" style="left:357px;letter-spacing:.2px">11/19/2011 19:23:01</div><div class="c" style="left:478px;letter-spacing:.2px">11/19/2011 19:23:01</div><div class="c" style="left:599px;width:64px;text-align:center">1</div><div class="c" style="left:665px;letter-spacing:.12px">No Actions Taken</div><div class="ib" style="left:786px"><svg width="18" height="18" viewBox="0 0 18 18" style="position:absolute;left:0;top:0"><path d="M2.300 10.600h9.600l4 4.100H6.500z" fill="#fff" stroke="#3c3c46" stroke-width="1"/><path d="M6.300 15.700h9.800" stroke="#4a4a52" stroke-width="1.800"/><rect x="6" y="1.200" width="2.100" height="12.400" fill="#6f7a12"/><rect x="6" y="1.200" width="2.100" height="2.100" fill="#c80c0c"/><rect x="6" y="3.300" width="2.100" height="1.800" fill="#3a3a10"/><rect x="6" y="5.200" width="2.100" height="2.600" fill="#c09a10"/><rect x="6" y="7.800" width="2.100" height="3.800" fill="#5f8a10"/></svg></div><div class="c" style="left:813px">ID= 2102; Src= MSExchange ADAccess;...</div></div>
<div class="row" style="top:354px"><div class="cb"><svg width="11" height="11" viewBox="0 0 11 11" style="position:absolute;left:0;top:0"><path d="M2 4v3l2.500 2.500L9 5V2L4.500 6.500z" fill="#000"/></svg></div><div class="sev" style="background:#f00808"></div><div class="c" style="left:54px;letter-spacing:.1px">CounterWatch- Processor Queue Length : System</div><div class="ib" style="left:330px"><svg width="18" height="18" viewBox="0 0 18 18" style="position:absolute;left:0;top:0"><g transform="translate(8.500 8.850) scale(.880) translate(-9.250 -8.750)"><path d="M5.600 12.300c1.200-1.500 1.300-3 1.500-4.600.2-2 1.200-3.500 3-3.700 1.500.1 2.300 1.300 2.500 3 .2 2 .3 3.500 1.100 5.300z" fill="#fff" stroke="#000" stroke-width="1.200"/><rect x="4" y="11.700" width="9.500" height="1.400" fill="#000"/><rect x="9.300" y="13" width="1.700" height="1.500" fill="#000"/><path d="M9.700 7.300L8.200 9" stroke="#2a8a8a" stroke-width="1.400"/><path d="M12.400 4.600L10 7" stroke="#f01010" stroke-width="2.300"/><path d="M7.800 8.800L5.400 12.300" stroke="#f01010" stroke-width="2.300"/></g></svg></div><div class="c" style="left:357px;letter-spacing:.2px">11/19/2011 04:26:03</div><div class="c" style="left:478px;letter-spacing:.2px">11/19/2011 10:12:21</div><div class="c" style="left:599px;width:64px;text-align:center">24</div><div class="c" style="left:665px;letter-spacing:.12px">No Actions Taken</div><div class="ib" style="left:786px"><svg width="18" height="18" viewBox="0 0 18 18" style="position:absolute;left:0;top:0"><path d="M2.300 10.600h9.600l4 4.100H6.500z" fill="#fff" stroke="#3c3c46" stroke-width="1"/><path d="M6.300 15.700h9.800" stroke="#4a4a52" stroke-width="1.800"/><rect x="6" y="1.200" width="2.100" height="12.400" fill="#6f7a12"/><rect x="6" y="1.200" width="2.100" height="2.100" fill="#c80c0c"/><rect x="6" y="3.300" width="2.100" height="1.800" fill="#3a3a10"/><rect x="6" y="5.200" width="2.100" height="2.600" fill="#c09a10"/><rect x="6" y="7.800" width="2.100" height="3.800" fill="#5f8a10"/></svg></div><div class="c" style="left:813px;letter-spacing:.07px">Value= 15.0000; Over Threshold= 5.0...</div></div>
<div class="row odd" style="top:376px"><div class="cb"><svg width="11" height="11" viewBox="0 0 11 11" style="position:absolute;left:0;top:0"><path d="M2 4v3l2.500 2.500L9 5V2L4.500 6.500z" fill="#000"/></svg></div><div class="sev" style="background:#ffff2a"></div><div class="c" style="left:54px">EventLogWatch- Application / Error</div><div class="ib" style="left:330px"><svg width="18" height="18" viewBox="0 0 18 18" style="position:absolute;left:0;top:0"><g transform="translate(8.500 8.850) scale(.880) translate(-9.250 -8.750)"><path d="M5.600 12.300c1.200-1.500 1.300-3 1.500-4.600.2-2 1.200-3.500 3-3.700 1.500.1 2.300 1.300 2.500 3 .2 2 .3 3.500 1.100 5.300z" fill="#fff" stroke="#000" stroke-width="1.200"/><rect x="4" y="11.700" width="9.500" height="1.400" fill="#000"/><rect x="9.300" y="13" width="1.700" height="1.500" fill="#000"/><path d="M9.700 7.300L8.200 9" stroke="#2a8a8a" stroke-width="1.400"/><path d="M12.400 4.600L10 7" stroke="#f01010" stroke-width="2.300"/><path d="M7.800 8.800L5.400 12.300" stroke="#f01010" stroke-width="2.300"/></g></svg></div><div class="c" style="left:357px;letter-spacing:.2px">11/19/2011 07:06:11</div><div class="c" style="left:478px;letter-spacing:.2px">11/19/2011 07:06:11</div><div class="c" style="left:599px;width:64px;text-align:center">1</div><div class="c" style="left:665px;letter-spacing:.12px">No Actions Taken</div><div class="ib" style="left:786px"><svg width="18" height="18" viewBox="0 0 18 18" style="position:absolute;left:0;top:0"><path d="M2.300 10.600h9.600l4 4.100H6.500z" fill="#fff" stroke="#3c3c46" stroke-width="1"/><path d="M6.300 15.700h9.800" stroke="#4a4a52" stroke-width="1.800"/><rect x="6" y="1.200" width="2.100" height="12.400" fill="#6f7a12"/><rect x="6" y="1.200" width="2.100" height="2.100" fill="#c80c0c"/><rect x="6" y="3.300" width="2.100" height="1.800" fill="#3a3a10"/><rect x="6" y="5.200" width="2.100" height="2.600" fill="#c09a10"/><rect x="6" y="7.800" width="2.100" height="3.800" fill="#5f8a10"/></svg></div><div class="c" style="left:813px">ID= 1028; Src= MSExchangeFDS; User=...</div></div>
<svg class="abs" style="left:0;top:0;pointer-events:none" width="1184" height="717" viewBox="0 0 1184 717">
<g fill="#2b2b2b" stroke="none">
<polygon points="132.5,403.8 126.2,418.9 141,417.6"/><polygon points="131.7,418 135.2,418 136.3,434.4 132.9,434.6"/>
<polygon points="422.1,658 414,644.9 406,656.4"/><polygon points="385.5,633.3 383.7,635.9 410.5,652.3 412.3,649.7"/>
<polygon points="665,658.2 678.2,649.4 680,663.3"/><polygon points="747.7,645.1 748.1,648.1 679.4,657.9 679,654.9"/>
</g></svg>
<div class="btn" style="left:413px;width:95px;border:1px solid #000">Select All<div style="position:absolute;left:2px;top:2px;right:2px;bottom:2px;border:1px dotted #000"></div></div>
<div class="btn" style="left:512px;width:95px">Unselect All</div>
<div class="btn" style="left:611px;width:110px">Acknowledge</div>
<div class="btn" style="left:725px;width:75px">Print</div>
<div class="btn" style="left:804px;width:75px">Close</div>
<div class="abs" style="left:1080px;top:672px;width:13px;height:13px;background:#fff;border:1px solid;border-color:#7b7b7b #d4d0c8 #d4d0c8 #7b7b7b;box-shadow:inset 1px 1px 0 #404040"></div>
<div class="abs" style="left:1095.5px;top:673px;letter-spacing:-.07px;font-size:11px;line-height:14px;white-space:pre" id="sfs">Show Full Status</div>
</body></html>
